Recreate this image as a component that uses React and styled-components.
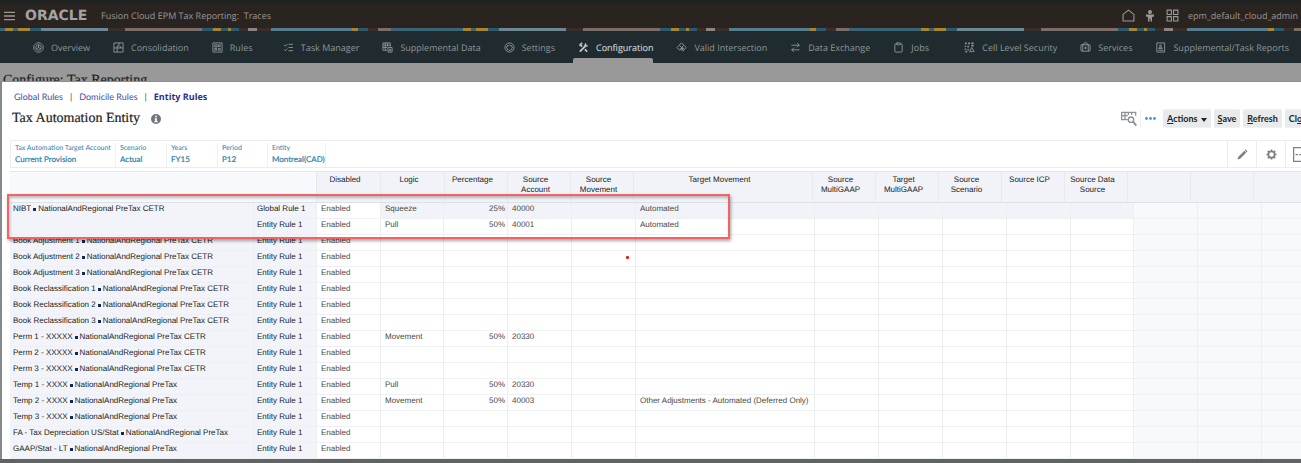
import React, { useState } from 'react'
import styled, { createGlobalStyle } from 'styled-components'
import { ArrowRightLeft, BriefcaseMedical, Clipboard, ListChecks } from 'lucide-react'

const GlobalStyle = createGlobalStyle`
  * { box-sizing: border-box; }
  html { overflow: hidden; background: #5f6363; }
  body {
    margin: 0;
    font-family: Lato, 'Open Sans', sans-serif;
    font-size: 9px;
    text-rendering: geometricPrecision;
  }
  button, input { font: inherit; }
  a { text-decoration: none; color: inherit; }
`

const Page = styled.div`
  overflow: hidden;
  padding-bottom: 3px;
  background: #5f6363;
`

/* ---------- top bar ---------- */

const TopBar = styled.header`
  display: flex;
  align-items: center;
  height: 28px;
  padding: 0 3px 0 4px;
  border-top: 3px solid #1f2322;
  background: #2a2421;
  color: #9b9896;
`

const IconButton = styled.button`
  display: flex;
  align-items: center;
  justify-content: center;
  width: ${(p) => p.$w || 22}px;
  height: 20px;
  padding: 0;
  border: 0;
  background: none;
  color: inherit;
`

const Logo = styled.span`
  min-width: 66px;
  margin-left: 10px;
  font: bold 14px/20px 'DejaVu Sans', sans-serif;
  color: #a5a3a1;
`

const AppName = styled.span`
  flex: 1;
  margin-left: 10px;
  font-family: 'Open Sans', sans-serif;
  white-space: pre;
`

const UserName = styled.span`
  margin-left: 5px;
  font-family: 'Open Sans', sans-serif;
`

const Ribbon = styled.div`
  height: 3px;
  background: repeating-linear-gradient(
    90deg,
    #3b6478 0 5px, #a8862f 5px 13px, #3b6478 13px 18px, #a8862f 18px 30px,
    #2c5a6c 30px 41px, #6f8792 41px 108px, #3a2e2b 108px 125px,
    #7d6c68 125px 202px, #2c5a6c 202px 213px, #a8862f 213px 221px,
    #2c5a6c 221px 228px, #a8862f 228px 231px, #2c5a6c 231px 239px,
    #3a2e2b 239px 248px, #8d8480 248px 257px, #3a2e2b 257px 271px,
    #557d8f 271px 352px, #a8862f 352px 358px, #2c5a6c 358px 368px,
    #3a2e2b 368px 378px, #7d6c68 378px 391px, #3b6478 391px 458px
  );
`

/* ---------- navigation ---------- */

const Nav = styled.nav`
  display: flex;
  gap: 18px;
  height: 32px;
  padding-left: 28px;
  background: #1f2b2f;
  font-family: 'Open Sans', sans-serif;
`

const NavItem = styled.a`
  display: flex;
  flex: none;
  flex-direction: column;
  color: ${(p) => (p.$active ? '#c3c7c8' : '#8e9697')};
`

const NavLabel = styled.span`
  display: flex;
  align-items: center;
  gap: 7px;
  height: 27px;
  padding: 5px 0 0 5px;
  white-space: nowrap;
  -webkit-text-stroke: ${(p) => (p.$active ? '0.2px' : '0')};

  svg { flex: none; }
  span { min-width: 30px; }
`

const NavMarker = styled.i`
  height: 5px;
  border-radius: 2px 2px 0 0;
  background: ${(p) => (p.$active ? '#999' : 'transparent')};
`

/* ---------- page behind the dialog ---------- */

const Backdrop = styled.div`
  height: 19px;
  padding: 9px 3px 0;
  overflow: hidden;
  background: #999;
  border-bottom: 1px solid #8b8f90;
`

const PageTitle = styled.h1`
  margin: 0;
  font: 14px/18px 'Liberation Serif', serif;
  color: #222;
  -webkit-text-stroke: 0.2px;
`

/* ---------- dialog ---------- */

/* wider than the window, the right end runs off the screen */
const Dialog = styled.main`
  width: calc(100% + 14px);
  padding: 7px 0 0 8px;
  border-left: 2px solid #85898b;
  background: #fff;
`

const Tabs = styled.div`
  display: flex;
  gap: 7px;
  padding-left: 4px;
  line-height: 16px;
  color: #444;
`

const Tab = styled.a`
  color: ${(p) => (p.$active ? '#2a2f92' : '#484ea3')};
  font-family: ${(p) => (p.$active ? "'Open Sans'" : 'Lato')}, sans-serif;
  font-weight: ${(p) => (p.$active ? 'bold' : 'normal')};
`

const Toolbar = styled.div`
  display: flex;
  align-items: center;
  gap: 3px;
  height: 27px;
  padding-left: 2px;
`

const DialogTitle = styled.h2`
  margin: 0 7px 0 0;
  font: 14px/20px 'Liberation Serif', serif;
  color: #222;
  -webkit-text-stroke: 0.2px;
`

const Spacer = styled.div`
  flex: 1;
`

const More = styled.button`
  display: flex;
  align-items: center;
  height: 18px;
  padding: 0 4px;
  border: 0;
  border-left: 1px solid #eee;
  background: none;
  color: #3399ea;
`

const Button = styled.button`
  height: 19px;
  padding: 0 4px;
  border: 1px solid #eef0f1;
  border-width: 1px 0;
  border-radius: 2px;
  background: #e8ebec;
  color: #222;
  font-weight: bold;
  line-height: 17px;
  white-space: nowrap;
`

const Caret = styled.i`
  display: inline-block;
  margin-left: 3px;
  border: 3px solid transparent;
  border-top: 4px solid #222;
  border-bottom: 0;
`

const PovBar = styled.div`
  display: flex;
  height: 28px;
  margin-top: 8px;
  border: 1px solid #ebeef0;
  color: #2d7fa6;
`

const PovItem = styled.div`
  width: ${(p) => p.$w}px;
  margin-top: 2px;
  padding: 0 4px;
  border-right: 1px solid #eff1f3;
  font-size: 7px;
  line-height: 11px;
  white-space: nowrap;

  strong {
    display: block;
    font-size: 8px;
    font-weight: normal;
    line-height: 10px;
    -webkit-text-stroke: 0.2px;
  }
`

const PovButton = styled.button`
  display: flex;
  align-items: center;
  justify-content: center;
  width: 29px;
  padding: 0;
  border: 0;
  border-left: 1px solid #ebeef0;
  background: none;
  color: #7b8185;
`

/* ---------- grid ---------- */

const GridArea = styled.section`
  position: relative;
  margin-top: 3px;
`

/* head and body keep their own column widths */
const Grid = styled.table`
  display: block;
  overflow: hidden;
  border-top: 1px solid #e4e7ea;
  font: 8px/10px 'Liberation Sans', Arial, sans-serif;
  color: #444;

  thead, tbody {
    display: table;
    width: 100%;
    table-layout: fixed;
    border-collapse: separate;
    border-spacing: 0;
  }
`

const HeadCell = styled.th`
  width: ${(p) => (p.$w ? p.$w + 'px' : 'auto')};
  height: 31px;
  padding: 3px 11px 0 4px;
  border-right: 1px solid #e6e9ed;
  border-bottom: 1px solid #dde1e5;
  background: ${(p) => (p.$corner ? '#f7f9fd' : '#f1f3f8')};
  font-weight: normal;
  vertical-align: top;
  color: #222;
`

const cellColor = { label: '#f2f4f9', row: '#f1f3f8', spare: '#f7f9fd', plain: '#fff' }

const Cell = styled.td`
  width: ${(p) => (p.$w ? p.$w + 'px' : 'auto')};
  height: 16px;
  padding: 1px 2px 0 ${(p) => (p.$kind === 'label' ? 3 : 4)}px;
  border-right: 1px solid #eceff2;
  border-bottom: 1px solid ${(p) => (p.$open ? 'transparent' : '#eef0f3')};
  background: ${(p) => cellColor[p.$kind]};
  color: ${(p) => (p.$kind === 'label' ? '#222' : '#484848')};
  font-weight: normal;
  text-align: ${(p) => p.$align || 'left'};
  vertical-align: top;
  white-space: nowrap;
`

const Square = styled.i`
  display: inline-block;
  width: 3px;
  height: 3px;
  margin: 0 2px;
  background: #14285a;
`

const Callout = styled.div`
  position: absolute;
  top: 23px;
  left: -3px;
  width: 723px;
  height: 45px;
  border: 2px solid #f26464;
  box-shadow: 1px 2px 3px rgba(0, 0, 0, 0.35), inset 1px 2px 3px rgba(0, 0, 0, 0.25);
  pointer-events: none;
`

const Pointer = styled.div`
  position: absolute;
  top: 85px;
  left: 616px;
  width: 3px;
  height: 3px;
  border-radius: 1px;
  background: #e02020;
`

const Svg = ({ size = 11, children, ...rest }) => (
  <svg width={size} height={size} viewBox="0 0 24 24" fill="none" stroke="currentColor" strokeWidth="2" aria-hidden="true" {...rest}>
    {children}
  </svg>
)

const lucide = { size: 11, strokeWidth: 2, 'aria-hidden': true }

const navItems = [
  {
    label: 'Overview',
    icon: <Svg><path d="M8 2h8l6 6v8l-6 6H8l-6-6V8z" /><circle cx="12" cy="12" r="6" /><path d="M12 12V6M12 12l5 3M12 12l-5 3" /></Svg>,
  },
  {
    label: 'Consolidation',
    icon: <Svg><path d="M2 2h20v20H2zM13 2v7M2 13h20M9 13v9M13 9H9v4M16 13V9" /></Svg>,
  },
  {
    label: 'Rules',
    icon: <Svg><path d="M2 2h20v20H2zM6 6h5v5H6zM14 6h4v4h-4zM6 14h4v4H6zM14 14h4v4h-4z" /></Svg>,
  },
  { label: 'Task Manager', icon: <ListChecks {...lucide} /> },
  {
    label: 'Supplemental Data',
    icon: <Svg><path d="M11 18H2V2h16v8M2 7h16M7 2v16M12 2v8M2 12h9" /><path d="M13 12h9v10h-9zM15 16h5M15 19h5" /></Svg>,
  },
  {
    label: 'Settings',
    icon: <Svg><circle cx="12" cy="12" r="10" /><path d="M12 6l2 2h3v3l2 1-2 2v3h-3l-2 2-2-2H7v-3l-2-2 2-1V8h3z" /></Svg>,
  },
  {
    label: 'Configuration',
    active: true,
    icon: <Svg strokeWidth="4"><path d="M4 21L16 9M20 21l-5-5M9 10L6 7" /><path d="M3 8l6-6M17 3l-2 6 6-1" strokeWidth="3.4" /></Svg>,
  },
  {
    label: 'Valid Intersection',
    icon: <Svg><path d="M12 2l5 5-5 5-5-5zM7 7l-5 5 6 6 5-6M17 7l5 5-7 8-6-6" /><path d="M12 12l4 4" strokeWidth="4" /></Svg>,
  },
  { label: 'Data Exchange', icon: <ArrowRightLeft {...lucide} /> },
  { label: 'Jobs', icon: <Clipboard {...lucide} /> },
  {
    label: 'Cell Level Security',
    icon: <Svg><path d="M2 3h4M9 3h4M16 3h5M3 8v3M3 14v3M3 21h4M9 8v4M9 15v3M16 8h5" strokeWidth="3.4" /><path d="M17 12l5 9H12z" /></Svg>,
  },
  { label: 'Services', icon: <BriefcaseMedical {...lucide} /> },
  {
    label: 'Supplemental/Task Reports',
    icon: <Svg><path d="M4 2h17v20H4z" /><circle cx="12" cy="8" r="2" /><path d="M8 14c0-4 8-4 8 0zM7 18h11" /></Svg>,
  },
]

const pov = [
  { label: 'Tax Automation Target Account', value: 'Current Provision', w: 105 },
  { label: 'Scenario', value: 'Actual', w: 51 },
  { label: 'Years', value: 'FY15', w: 51 },
  { label: 'Period', value: 'P12', w: 50 },
  { label: 'Entity', value: 'Montreal(CAD)', w: 58 },
]

const headers = [
  ['Disabled', 64], ['Logic', 64], ['Percentage', 63], ['Source Account', 63], ['Source Movement', 63],
  ['Target Movement', 179], ['Source MultiGAAP', 63], ['Target MultiGAAP', 63], ['Source Scenario', 63],
  ['Source ICP', 63], ['Source Data Source', 63], ['', 63], ['', 63], ['', 0],
]

const bodyWidths = [64, 63, 64, 64, 64, 179, 64, 64, 64, 64, 63, 64, 64, 0]

const CETR = 'NationalAndRegional PreTax CETR'
const REG = 'NationalAndRegional PreTax'

const rows = [
  { name: 'NIBT', scope: CETR, rule: 'Global Rule 1', logic: 'Squeeze', pct: '25%', account: '40000', target: 'Automated', selected: true },
  { rule: 'Entity Rule 1', logic: 'Pull', pct: '50%', account: '40001', target: 'Automated' },
  { name: 'Book Adjustment 1', scope: CETR },
  { name: 'Book Adjustment 2', scope: CETR },
  { name: 'Book Adjustment 3', scope: CETR },
  { name: 'Book Reclassification 1', scope: CETR },
  { name: 'Book Reclassification 2', scope: CETR },
  { name: 'Book Reclassification 3', scope: CETR },
  { name: 'Perm 1 - XXXXX', scope: CETR, logic: 'Movement', pct: '50%', account: '20330' },
  { name: 'Perm 2 - XXXXX', scope: CETR },
  { name: 'Perm 3 - XXXXX', scope: CETR },
  { name: 'Temp 1 - XXXX', scope: REG, logic: 'Pull', pct: '50%', account: '20330' },
  { name: 'Temp 2 - XXXX', scope: REG, logic: 'Movement', pct: '50%', account: '40003', target: 'Other Adjustments - Automated (Deferred Only)' },
  { name: 'Temp 3 - XXXX', scope: REG },
  { name: 'FA - Tax Depreciation US/Stat', scope: REG },
  { name: 'GAAP/Stat - LT', scope: REG },
]

function Row({ row }) {
  const values = ['Enabled', row.logic, row.pct, row.account, '', row.target]
  const kindOf = (i) => {
    if (i > 10) return 'spare'
    return row.selected && i > 0 ? 'row' : 'plain'
  }

  return (
    <tr>
      <Cell as="th" scope="row" $w={244} $kind="label" $open={row.selected}>
        {row.name && <>{row.name}<Square />{row.scope}</>}
      </Cell>
      <Cell as="th" scope="row" $w={63} $kind="label">{row.rule || 'Entity Rule 1'}</Cell>
      {bodyWidths.map((w, i) => (
        <Cell key={i} $w={w} $kind={kindOf(i)} $align={i === 2 ? 'right' : 'left'}>{values[i]}</Cell>
      ))}
    </tr>
  )
}

function App() {
  const [tab, setTab] = useState('Entity Rules')
  const tabs = ['Global Rules', 'Domicile Rules', 'Entity Rules']

  return (
    <Page>
      <GlobalStyle />
      <TopBar>
        <IconButton $w={11} aria-label="Menu">
          <Svg size={12} strokeWidth="3"><path d="M0 4h24M0 12h24M0 20h24" /></Svg>
        </IconButton>
        <Logo>ORACLE</Logo>
        <AppName>{'Fusion Cloud EPM Tax Reporting:  Traces'}</AppName>
        <IconButton aria-label="Home">
          <Svg size={13}><path d="M2 10L12 2l10 8v12H2z" /></Svg>
        </IconButton>
        <IconButton aria-label="Accessibility">
          <Svg size={12} fill="currentColor" stroke="none"><circle cx="12" cy="4" r="4" /><path d="M4 9h16v4l-4 1v9h-3v-6h-2v6H8v-9l-4-1z" /></Svg>
        </IconButton>
        <IconButton aria-label="Applications">
          <Svg size={13}><path d="M2 2h8v8H2zM14 2h8v8h-8zM2 14h8v8H2zM14 14h8v8h-8z" /></Svg>
        </IconButton>
        <UserName>epm_default_cloud_admin</UserName>
      </TopBar>
      <Ribbon />

      <Nav>
        {navItems.map((item) => (
          <NavItem href="#" key={item.label} $active={item.active}>
            <NavLabel $active={item.active}>{item.icon}<span>{item.label}</span></NavLabel>
            <NavMarker $active={item.active} />
          </NavItem>
        ))}
      </Nav>

      <Backdrop>
        <PageTitle>Configure: Tax Reporting</PageTitle>
      </Backdrop>

      <Dialog>
        <Tabs>
          {tabs.map((name, i) => (
            <React.Fragment key={name}>
              {i > 0 && <span>|</span>}
              <Tab href="#" $active={tab === name} onClick={() => setTab(name)}>{name}</Tab>
            </React.Fragment>
          ))}
        </Tabs>

        <Toolbar>
          <DialogTitle>Tax Automation Entity</DialogTitle>
          <IconButton $w={12} aria-label="Information">
            <Svg size={10} stroke="none"><circle cx="12" cy="12" r="12" fill="#6f767b" /><path d="M10 4h4v4h-4zM9 10h5v7h2v3H8v-3h2v-4H9z" fill="#fff" /></Svg>
          </IconButton>
          <Spacer />
          <IconButton $w={17} aria-label="Find member">
            <Svg size={16} stroke="#8d9296"><path d="M10 13H1V2h21v5M1 7h9M6 2v11M11 2v4M16 2v4" /><circle cx="15" cy="13" r="4" fill="#fff" /><path d="M18 16l5 6" strokeWidth="3" /></Svg>
          </IconButton>
          <More aria-label="More">
            <svg width="11" height="3" viewBox="0 0 11 3" fill="currentColor"><circle cx="1.5" cy="1.5" r="1.4" /><circle cx="5.5" cy="1.5" r="1.4" /><circle cx="9.5" cy="1.5" r="1.4" /></svg>
          </More>
          <Button><u>A</u>ctions<Caret /></Button>
          <Button><u>S</u>ave</Button>
          <Button><u>R</u>efresh</Button>
          <Button>Cl<u>o</u>se</Button>
        </Toolbar>

        <PovBar>
          {pov.map((p) => (
            <PovItem key={p.label} $w={p.w}>{p.label}<strong>{p.value}</strong></PovItem>
          ))}
          <Spacer />
          <PovButton aria-label="Edit">
            <Svg size={11} fill="currentColor" stroke="none"><path d="M1 23l2-6L16 4l4 4L7 21zM17 3l2-2 4 4-2 2z" /></Svg>
          </PovButton>
          <PovButton aria-label="Settings">
            <Svg size={11}><circle cx="12" cy="12" r="7" strokeWidth="4" /><path d="M12 1v4M12 19v4M1 12h4M19 12h4M4 4l3 3M17 17l3 3M4 20l3-3M17 7l3-3" strokeWidth="3.4" /></Svg>
          </PovButton>
          <PovButton aria-label="Fit columns">
            <Svg size={15}><path d="M1 1h22v22H1zM4 12h4M10 12h3M15 12h5" /></Svg>
          </PovButton>
        </PovBar>

        <GridArea>
          <Grid>
            <thead>
              <tr>
                <HeadCell $w={307} $corner aria-label="Rule" />
                {headers.map(([text, w], i) => (
                  <HeadCell key={i} $w={w} scope="col">{text}</HeadCell>
                ))}
              </tr>
            </thead>
            <tbody>
              {rows.map((row, i) => <Row key={i} row={row} />)}
            </tbody>
          </Grid>
          <Callout />
          <Pointer />
        </GridArea>
      </Dialog>
    </Page>
  )
}

export default App
